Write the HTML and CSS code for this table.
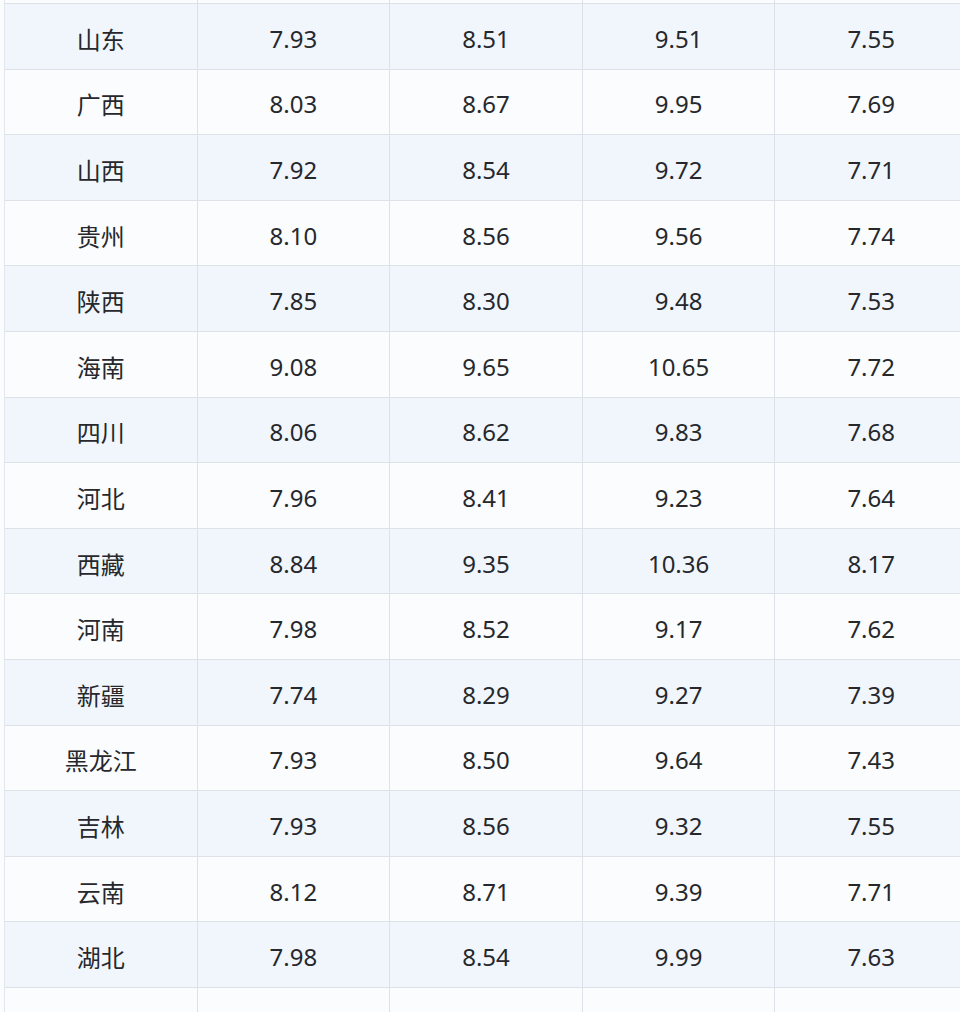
FILE: index.html
```html
<!DOCTYPE html>
<html lang="zh-CN">
<head>
<meta charset="utf-8">
<title>油价表</title>
<link rel="stylesheet" href="styles.css">
</head>
<body>
<div class="table">
  <div class="row row-cut"><div class="cell"></div><div class="cell"></div><div class="cell"></div><div class="cell"></div><div class="cell"></div></div>
  <div class="row alt"><div class="cell">山东</div><div class="cell">7.93</div><div class="cell">8.51</div><div class="cell">9.51</div><div class="cell">7.55</div></div>
  <div class="row"><div class="cell">广西</div><div class="cell">8.03</div><div class="cell">8.67</div><div class="cell">9.95</div><div class="cell">7.69</div></div>
  <div class="row alt"><div class="cell">山西</div><div class="cell">7.92</div><div class="cell">8.54</div><div class="cell">9.72</div><div class="cell">7.71</div></div>
  <div class="row"><div class="cell">贵州</div><div class="cell">8.10</div><div class="cell">8.56</div><div class="cell">9.56</div><div class="cell">7.74</div></div>
  <div class="row alt"><div class="cell">陕西</div><div class="cell">7.85</div><div class="cell">8.30</div><div class="cell">9.48</div><div class="cell">7.53</div></div>
  <div class="row"><div class="cell">海南</div><div class="cell">9.08</div><div class="cell">9.65</div><div class="cell">10.65</div><div class="cell">7.72</div></div>
  <div class="row alt"><div class="cell">四川</div><div class="cell">8.06</div><div class="cell">8.62</div><div class="cell">9.83</div><div class="cell">7.68</div></div>
  <div class="row"><div class="cell">河北</div><div class="cell">7.96</div><div class="cell">8.41</div><div class="cell">9.23</div><div class="cell">7.64</div></div>
  <div class="row alt"><div class="cell">西藏</div><div class="cell">8.84</div><div class="cell">9.35</div><div class="cell">10.36</div><div class="cell">8.17</div></div>
  <div class="row"><div class="cell">河南</div><div class="cell">7.98</div><div class="cell">8.52</div><div class="cell">9.17</div><div class="cell">7.62</div></div>
  <div class="row alt"><div class="cell">新疆</div><div class="cell">7.74</div><div class="cell">8.29</div><div class="cell">9.27</div><div class="cell">7.39</div></div>
  <div class="row"><div class="cell">黑龙江</div><div class="cell">7.93</div><div class="cell">8.50</div><div class="cell">9.64</div><div class="cell">7.43</div></div>
  <div class="row alt"><div class="cell">吉林</div><div class="cell">7.93</div><div class="cell">8.56</div><div class="cell">9.32</div><div class="cell">7.55</div></div>
  <div class="row"><div class="cell">云南</div><div class="cell">8.12</div><div class="cell">8.71</div><div class="cell">9.39</div><div class="cell">7.71</div></div>
  <div class="row alt"><div class="cell">湖北</div><div class="cell">7.98</div><div class="cell">8.54</div><div class="cell">9.99</div><div class="cell">7.63</div></div>
  <div class="row"><div class="cell"></div><div class="cell"></div><div class="cell"></div><div class="cell"></div><div class="cell"></div></div>
</div>
</body>
</html>
```

FILE: styles.css
```css
html, body {
  margin: 0;
  padding: 0;
  background: #fbfcfe;
  overflow: hidden;
  height: 1012px;
}

.table {
  width: 963px;
  margin-left: 4px;
  border-left: 1px solid #e2e7ed;
  font-family: "Noto Sans", "Noto Sans CJK SC", sans-serif;
  font-size: 24px;
  color: #26282c;
}

.row {
  display: grid;
  grid-template-columns: repeat(5, 1fr);
  height: 65.6px;
  box-sizing: border-box;
  border-bottom: 1px solid #dde2e8;
  background: #fafcfe;
}

.row.alt {
  background: #f1f6fc;
}

.row-cut {
  height: 4px;
}

.cell {
  display: flex;
  align-items: center;
  justify-content: center;
  border-right: 1px solid #dde2e8;
  padding-top: 4px;
  box-sizing: border-box;
  white-space: nowrap;
}
```
